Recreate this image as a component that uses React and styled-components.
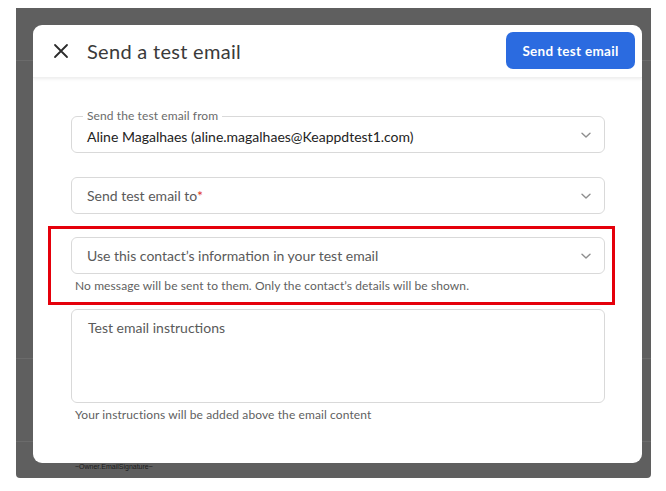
import React from "react";
import styled, { createGlobalStyle } from "styled-components";

const GlobalStyle = createGlobalStyle`
  html, body {
    margin: 0;
    padding: 0;
    background: #ffffff;
  }
  body {
    font-family: "Lato", "Open Sans", sans-serif;
    -webkit-font-smoothing: antialiased;
  }
`;

const Page = styled.div`
  width: 666px;
  height: 491px;
  padding: 8px 15px 0 16px;
  box-sizing: border-box;
`;

const Frame = styled.div`
  display: grid;
  width: 635px;
  height: 470px;
  background: #5f5f5f;
  border-radius: 0 0 4px 4px;
  overflow: hidden;
`;

// the page under the overlay, darkened
const BackPage = styled.div`
  grid-area: 1 / 1;
  display: flex;
  flex-direction: column;
`;

const BackRow = styled.div`
  height: ${(p) => p.h}px;
  border-bottom: 1px solid #6b6b6b;
  flex-shrink: 0;
`;

const Signature = styled.div`
  padding: 21px 0 0 59px;
  font-family: "Liberation Sans", sans-serif;
  font-size: 7px;
  line-height: 8px;
  color: #1a1a1a;
`;

const Modal = styled.div`
  grid-area: 1 / 1;
  margin: 17px 0 0 17px;
  width: 609px;
  height: 438px;
  background: #ffffff;
  border-radius: 9px;
  display: flex;
  flex-direction: column;
  overflow: hidden;
`;

const Header = styled.div`
  height: 52px;
  flex-shrink: 0;
  display: flex;
  align-items: center;
  padding: 0 7px 0 19px;
  box-shadow: 0 1px 3px rgba(0, 0, 0, 0.08);
  border-bottom: 1px solid #f0f0f0;
`;

const CloseButton = styled.button`
  border: 0;
  background: none;
  padding: 0;
  width: 18px;
  height: 18px;
  display: flex;
  align-items: center;
  justify-content: center;
  color: #2b2b2b;
`;

const Title = styled.h1`
  margin: 0 0 0 17px;
  font-size: 20px;
  font-weight: 400;
  color: #3a3a3a;
  flex: 1;
  letter-spacing: 0.3px;
`;

const PrimaryButton = styled.button`
  border: 0;
  background: #2b6be0;
  color: #ffffff;
  border-radius: 7px;
  width: 129px;
  height: 37px;
  font-family: "Lato", sans-serif;
  font-size: 13.5px;
  font-weight: 700;
  letter-spacing: 0.3px;
  margin-top: -1px;
`;

const Body = styled.div`
  display: flex;
  flex-direction: column;
  padding: 38px 37px 0 38px;
`;

const FieldBox = styled.div`
  position: relative;
  height: ${(p) => p.h || 37}px;
  border: 1px solid #d9d9d9;
  border-radius: 6px;
  box-sizing: border-box;
  display: flex;
  align-items: ${(p) => (p.multiline ? "flex-start" : "center")};
  padding: ${(p) => (p.multiline ? "9px 16px" : "0 12px 0 15px")};
  margin-bottom: ${(p) => p.mb || 0}px;
`;

const FloatingLabel = styled.span`
  position: absolute;
  top: -8px;
  left: 11px;
  padding: 0 4px;
  background: #ffffff;
  font-size: 12px;
  line-height: 14px;
  letter-spacing: 0.1px;
  color: #6b6b6b;
`;

const Value = styled.span`
  flex: 1;
  font-size: 14px;
  color: ${(p) => (p.placeholder ? "#5a5a5a" : "#232323")};
  padding-top: ${(p) => (p.shift ? 3 : 0)}px;
`;

const Required = styled.span`
  color: #e0362c;
`;

const Chevron = styled.svg`
  width: 12px;
  height: 12px;
  color: #8f8f8f;
  flex-shrink: 0;
`;

const Highlight = styled.div`
  margin: 12px -10px 4px -23px;
  padding: 8px 7px 9px 20px;
  border: 3px solid #e5000b;
`;

const Helper = styled.div`
  font-size: 12px;
  letter-spacing: 0.1px;
  color: #5f5f5f;
  padding: ${(p) => p.pt || 6}px 0 0 ${(p) => p.pl || 4}px;
`;

const ChevronIcon = () => (
  <Chevron viewBox="0 0 12 12" fill="none">
    <path d="M2 4.2 L6 8 L10 4.2" stroke="currentColor" strokeWidth="1.4" strokeLinecap="round" strokeLinejoin="round" />
  </Chevron>
);

const Select = ({ label, children, placeholder, mb }) => (
  <FieldBox mb={mb}>
    {label && <FloatingLabel>{label}</FloatingLabel>}
    <Value placeholder={placeholder} shift={!!label}>{children}</Value>
    <ChevronIcon />
  </FieldBox>
);

const App = () => (
  <>
    <GlobalStyle />
    <Page>
      <Frame>
        <BackPage>
          <BackRow h={52} />
          <BackRow h={297} />
          <BackRow h={82} />
          <Signature>~Owner.EmailSignature~</Signature>
        </BackPage>
        <Modal>
          <Header>
            <CloseButton aria-label="Close">
              <svg width="16" height="16" viewBox="0 0 16 16">
                <path d="M2 2 L14 14 M14 2 L2 14" stroke="currentColor" strokeWidth="1.8" strokeLinecap="round" />
              </svg>
            </CloseButton>
            <Title>Send a test email</Title>
            <PrimaryButton>Send test email</PrimaryButton>
          </Header>
          <Body>
            <Select label="Send the test email from" mb={24}>
              Aline Magalhaes (aline.magalhaes@Keappdtest1.com)
            </Select>
            <Select placeholder>
              Send test email to<Required>*</Required>
            </Select>
            <Highlight>
              <Select placeholder>Use this contact’s information in your test email</Select>
              <Helper pt={4} pl={4}>No message will be sent to them. Only the contact’s details will be shown.</Helper>
            </Highlight>
            <FieldBox h={94} multiline>
              <Value placeholder>Test email instructions</Value>
            </FieldBox>
            <Helper pt={4} pl={4}>Your instructions will be added above the email content</Helper>
          </Body>
        </Modal>
      </Frame>
    </Page>
  </>
);

export default App;
